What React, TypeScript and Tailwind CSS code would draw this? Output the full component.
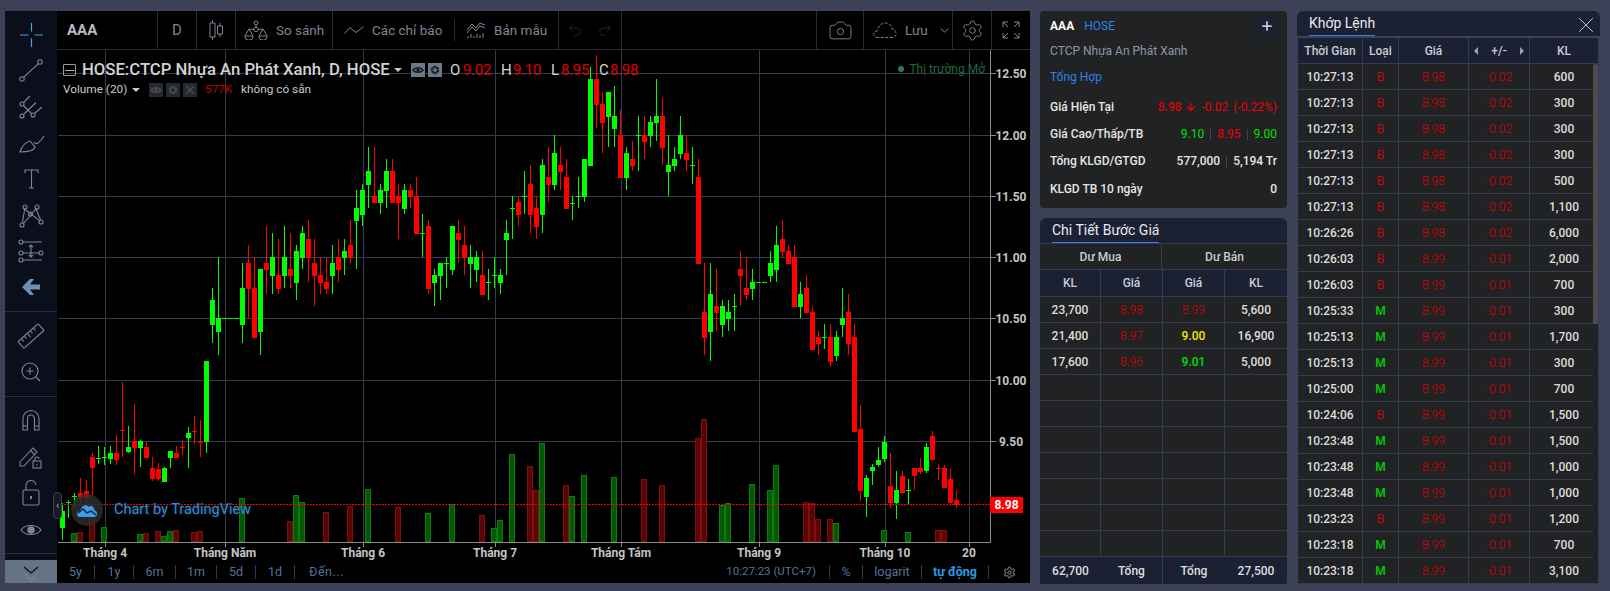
import { ArrowDown, Camera, Plus, Redo2, Settings, Undo2, X } from 'lucide-react'
import type { ReactNode } from 'react'

// [green, wickTop, bodyTop, bodyBottom, wickBottom], one per day, 6px apart from x=62
const candles: [number, number, number, number, number][] = [
  [1,503,511,528,540],[1,500,502,502,518],[1,493,496,496,507],[0,478,493,498,503],[0,480,491,498,503],
  [0,453,457,468,497],[1,446,458,458,464],[1,447,457,457,465],[1,446,453,459,464],[0,435,453,460,465],
  [0,382,430,431,457],[1,426,447,452,453],[0,404,441,448,474],[1,440,441,448,467],[0,442,447,458,459],
  [0,457,468,479,481],[0,463,469,479,481],[1,467,468,482,482],[1,451,451,458,468],[0,446,453,458,458],
  [0,440,447,447,455],[1,427,433,438,468],[0,416,431,431,444],[0,420,442,442,457],[1,361,361,442,453],
  [1,288,300,325,343],[1,257,318,332,355],[1,318,318,318,318],[1,318,318,318,318],[1,318,318,318,318],
  [1,263,288,325,343],[0,245,263,289,318],[0,257,288,338,338],[1,269,269,332,355],[0,226,263,270,294],
  [1,233,257,276,294],[0,239,275,289,294],[1,226,257,276,288],[0,233,269,276,288],[1,245,251,283,300],
  [1,226,233,258,269],[0,220,239,258,282],[0,239,263,276,306],[0,257,275,283,294],[0,257,282,289,294],
  [1,245,263,276,294],[0,239,257,270,282],[1,239,251,258,275],[0,220,245,258,263],[1,190,208,221,269],
  [1,184,190,215,226],[1,147,171,185,208],[0,147,196,203,203],[1,184,190,203,214],[1,159,171,191,208],
  [0,159,171,203,203],[0,184,196,203,239],[1,184,190,209,214],[0,184,190,197,208],[0,177,196,234,234],
  [1,214,233,233,257],[0,220,226,289,294],[1,269,275,283,306],[1,263,263,276,300],[1,257,263,263,288],
  [1,226,226,270,275],[0,220,233,240,263],[0,226,245,258,275],[1,245,257,264,288],[1,251,257,270,282],
  [0,251,275,295,295],[1,269,282,282,300],[1,257,275,275,288],[1,269,275,283,294],[1,220,233,240,275],
  [1,196,208,208,239],[0,196,202,215,226],[1,171,196,196,214],[0,165,184,215,233],[0,196,208,227,239],
  [1,159,165,215,233],[0,147,177,185,202],[1,135,153,185,190],[0,147,165,172,190],[0,159,177,209,209],
  [1,196,203,203,220],[1,177,196,196,208],[1,159,159,197,202],[1,67,79,166,166],[0,55,79,105,128],
  [0,92,104,123,153],[1,92,92,117,147],[1,86,116,129,147],[0,110,135,178,178],[1,147,153,178,190],
  [0,141,159,166,171],[1,116,135,135,171],[0,116,135,142,159],[1,116,122,136,147],[1,79,116,123,141],
  [0,98,116,148,165],[1,135,165,172,196],[1,147,159,166,171],[1,116,135,154,159],[0,135,153,160,171],
  [1,147,165,165,184],[0,159,177,264,264],[0,263,312,338,355],[1,263,294,332,361],[0,269,306,313,331],
  [1,300,306,325,337],[1,300,312,319,331],[1,294,306,306,331],[0,251,269,276,306],[0,257,288,295,300],
  [1,269,282,289,300],[1,282,282,282,282],[1,282,282,282,282],[1,251,263,276,282],[1,226,245,270,282],
  [0,220,239,252,257],[0,245,251,264,264],[0,245,257,307,307],[1,282,294,307,318],[0,275,288,313,313],
  [0,306,312,350,350],[0,331,337,344,355],[1,324,337,337,349],[0,324,337,362,367],[1,331,337,356,361],
  [1,288,318,325,337],[0,294,312,344,355],[0,324,337,432,432],[0,405,429,491,501],[1,475,478,497,517],
  [1,464,467,471,485],[1,447,460,465,467],[1,436,442,459,462],[0,453,486,503,508],[1,471,490,503,519],
  [0,471,476,493,493],[1,479,490,490,505],[0,468,468,476,490],[0,458,468,472,474],[1,443,447,471,473],
  [0,431,436,460,460],[0,464,468,468,480],[0,465,468,488,488],[0,469,479,503,503],[0,490,500,505,508],
]

// [candle index, green, top y]
const volumes: [number, number, number][] = [
  [2,1,533],[3,0,532],[5,0,513],[7,1,527],[13,1,534],[14,0,533],[16,0,531],[17,1,536],[18,1,531],[19,0,530],
  [22,0,532],[23,0,531],[30,1,498],[38,0,521],[39,1,495],[40,1,502],[44,0,512],[48,0,506],[51,1,489],[56,0,507],
  [61,1,513],[65,1,504],[70,0,515],[72,1,528],[73,1,520],[75,1,454],[78,0,466],[79,0,490],[80,1,443],[84,0,485],
  [85,1,496],[87,1,475],[92,1,477],[97,0,479],[100,0,485],[106,0,438],[107,0,419],[110,1,505],[111,1,503],
  [115,1,484],[118,1,490],[119,1,465],[124,0,502],[125,0,503],[126,0,519],[128,0,519],[129,1,523],[137,1,530],
  [141,1,532],[146,0,530],[147,0,530],
]

const priceLines = [
  { y: 73, label: '12.50' }, { y: 135, label: '12.00' }, { y: 196, label: '11.50' }, { y: 257, label: '11.00' },
  { y: 318, label: '10.50' }, { y: 380, label: '10.00' }, { y: 441, label: '9.50' },
]
const timeLines = [
  { x: 105, label: 'Tháng 4' }, { x: 225, label: 'Tháng Năm' }, { x: 363, label: 'Tháng 6' }, { x: 495, label: 'Tháng 7' },
  { x: 621, label: 'Tháng Tám' }, { x: 759, label: 'Tháng 9' }, { x: 885, label: 'Tháng 10' }, { x: 969, label: '20' },
]

const trades: [string, string, string, string, string][] = [
  ['10:27:13','B','8.98','-0.02','600'],['10:27:13','B','8.98','-0.02','300'],['10:27:13','B','8.98','-0.02','300'],
  ['10:27:13','B','8.98','-0.02','300'],['10:27:13','B','8.98','-0.02','500'],['10:27:13','B','8.98','-0.02','1,100'],
  ['10:26:26','B','8.98','-0.02','6,000'],['10:26:03','B','8.99','-0.01','2,000'],['10:26:03','B','8.99','-0.01','700'],
  ['10:25:33','M','8.99','-0.01','300'],['10:25:13','M','8.99','-0.01','1,700'],['10:25:13','M','8.99','-0.01','300'],
  ['10:25:00','M','8.99','-0.01','700'],['10:24:06','B','8.99','-0.01','1,500'],['10:23:48','M','8.99','-0.01','1,500'],
  ['10:23:48','M','8.99','-0.01','1,000'],['10:23:48','M','8.99','-0.01','1,000'],['10:23:23','B','8.99','-0.01','1,200'],
  ['10:23:18','M','8.99','-0.01','700'],['10:23:18','M','8.99','-0.01','3,100'],
]

const book = [
  { buy: '23,700', bid: '8.98', ask: '8.99', askColor: 'text-[#d90000]', sell: '5,600' },
  { buy: '21,400', bid: '8.97', ask: '9.00', askColor: 'text-[#f5e400]', sell: '16,900' },
  { buy: '17,600', bid: '8.96', ask: '9.01', askColor: 'text-[#00e000]', sell: '5,000' },
]

function Tool({ children, className = 'h-[36px]' }: { children: ReactNode; className?: string }) {
  return (
    <div className={`flex items-center justify-center ${className}`}>
      <svg width="30" height="30" viewBox="0 0 30 30" fill="none" stroke="#7b8696" strokeWidth="1.1">
        {children}
      </svg>
    </div>
  )
}

function LeftToolbar() {
  return (
    <div className="relative flex w-[52px] shrink-0 flex-col bg-[#0b0f1b] pt-[6px]">
      <Tool>
        <path d="M4 15H12.5M18.5 15H27M15.5 3V11.5M15.5 18.5V27" stroke="#4aa6dc" strokeWidth="1.2" />
      </Tool>
      <Tool>
        <circle cx="6" cy="23" r="2.2" /><circle cx="24" cy="6" r="2.2" /><path d="M7.6 21.4 22.4 7.6" />
      </Tool>
      <Tool>
        <circle cx="6" cy="12" r="2" /><circle cx="6" cy="24" r="2" /><circle cx="17" cy="23" r="2" />
        <path d="M7.5 10.5 14 4M7.5 22.5 20 10.5M18.5 21.5 26 15M7.5 13.5 15.5 21.5" />
      </Tool>
      <Tool>
        <path d="M4 24C6 18 10 14 14 13L19 19C18 23 12 24 4 24Z" /><path d="M18 14C20 18 24 14 28 8" />
      </Tool>
      <Tool>
        <path d="M9 9V6H22V9M15.5 6V24M13 24H18" />
      </Tool>
      <Tool>
        <circle cx="9" cy="7" r="2" /><circle cx="21" cy="7" r="2" /><circle cx="6" cy="25" r="2" />
        <circle cx="25" cy="22" r="2" /><circle cx="14.5" cy="14" r="2" />
        <path d="M6.4 23 8.7 9 23.5 20.6M7.5 23.5 20 8.8 24.6 20" />
      </Tool>
      <Tool>
        <circle cx="5" cy="6" r="2" /><circle cx="5" cy="17" r="2" /><circle cx="5" cy="24" r="2" /><circle cx="25" cy="17" r="2" />
        <path d="M7 6H26M7 17H23M7 24H26M15 9V21M13 11 15 9 17 11M13 19 15 21 17 19" />
      </Tool>
      <Tool>
        <path d="M6 15 14 7H18L14 12.5H24V17.5H14L18 23H14Z" fill="#6c8fb5" stroke="none" />
      </Tool>
      <div className="mt-[6px] border-b border-[#2b303d]" />
      <Tool className="mt-[6px] h-[36px]">
        <g transform="rotate(-42 15 15)">
          <rect x="1.5" y="10.5" width="27" height="9" rx="1" />
          <path d="M6 10.5V14M10 10.5V14M14 10.5V15.5M18 10.5V14M22 10.5V14" />
        </g>
      </Tool>
      <Tool>
        <circle cx="14" cy="14" r="8" /><path d="M10.5 14H17.5M14 10.5V17.5M20 20 24 24" />
      </Tool>
      <div className="mt-[6px] border-b border-[#2b303d]" />
      <Tool className="mt-[5px] h-[36px]">
        <path d="M7 25V13.5A8 8 0 0 1 23 13.5V25H18.5V13.5A3.5 3.5 0 0 0 11.5 13.5V25ZM7 21H11.5M18.5 21H23" />
      </Tool>
      <Tool>
        <path d="M4 21 17 7 21 11 8 25 4 25ZM14.5 9.5 18.5 13.5" />
        <rect x="17" y="20" width="8" height="7" /><path d="M19 20V18A2 2 0 0 1 23 18" /><path d="M21 23V24.5" />
      </Tool>
      <Tool className="h-[38px]">
        <rect x="7" y="12" width="16" height="15" rx="1.5" /><path d="M10 12V8A5 5 0 0 1 20 7" />
        <path d="M15 18V21" strokeWidth="2" />
      </Tool>
      <Tool>
        <path d="M5 15C9 9 21 9 25 15C21 21 9 21 5 15Z" /><circle cx="15" cy="15" r="3.2" fill="#7b8696" />
      </Tool>
      <div className="mt-[5px] border-b border-[#2b303d]" />
      <div className="absolute bottom-0 left-0 flex h-[23px] w-full justify-center bg-[#667382]">
        <svg width="20" height="23" viewBox="0 0 20 23" fill="none">
          <path d="M3 13 10 19 17 13M4 17 10 22 16 17" stroke="#7d8998" />
          <path d="M3 7 10 13 17 7" stroke="#0b0f1b" strokeWidth="1.3" />
        </svg>
      </div>
    </div>
  )
}

function Seg({ className, children }: { className: string; children?: ReactNode }) {
  return <div className={`flex h-full shrink-0 items-center border-r border-[#272b3a] ${className}`}>{children}</div>
}

function TopBar() {
  return (
    <div className="flex h-[39px] shrink-0 items-center border-b border-[#272b3a] text-[13.5px] text-[#7a8597]">
      <Seg className="w-[101px] pl-[10px] text-[15px] font-bold text-[#b8bcc4]">AAA</Seg>
      <Seg className="w-[39px] justify-center text-[15px]">D</Seg>
      <Seg className="w-[39px] justify-center">
        <svg width="16" height="22" viewBox="0 0 16 22" fill="none" stroke="#7a8597">
          <path d="M4.5 1V4M4.5 18V21M4.5 4H2V18H7V4ZM12 4V7M12 15V18M9.5 7H14.5V15H9.5Z" />
        </svg>
      </Seg>
      <Seg className="w-[97px] gap-[8px] pl-[8px]">
        <svg width="24" height="20" viewBox="0 0 24 20" fill="none" stroke="#7a8597">
          <circle cx="12" cy="3" r="2" /><circle cx="12" cy="9.5" r="2.2" /><path d="M12 5V7.3M1 16 5 9 10 9.5M14 9.5 19 9 23 16M5 9 9 16M19 9 15 16" />
          <path d="M1 16H9V17A3 2.4 0 0 1 1 17ZM15 16H23V17A3 2.4 0 0 1 15 17Z" />
        </svg>
        <span>So sánh</span>
      </Seg>
      <div className="flex h-full w-[121px] shrink-0 items-center gap-[8px] pl-[11px]">
        <svg width="20" height="10" viewBox="0 0 20 10" fill="none" stroke="#7a8597">
          <path d="M0.5 8.5 6 2.5 12 7.5 19.5 1.5" />
        </svg>
        <span>Các chỉ báo</span>
      </div>
      <div className="h-[22px] w-px shrink-0 bg-[#272b3a]" />
      <Seg className="w-[104px] gap-[8px] pl-[11px]">
        <svg width="20" height="18" viewBox="0 0 20 18" fill="none" stroke="#7a8597">
          <path d="M1 9 6 3 10 7 14 2 19 4M1 12 6 6 10 10 14 5 19 7" />
          <path d="M2 17V15M5 17V13M8 17V15M11 17V13M14 17V14M17 17V12" />
        </svg>
        <span>Bản mẫu</span>
      </Seg>
      <Seg className="w-[63px] justify-center gap-[14px]">
        <Undo2 size={16} strokeWidth={1} className="text-[#33373f]" />
        <Redo2 size={16} strokeWidth={1} className="text-[#33373f]" />
      </Seg>
      <Seg className="w-[195px]" />
      <Seg className="w-[47px] justify-center">
        <Camera size={25} strokeWidth={0.9} className="text-[#7a8597]" />
      </Seg>
      <Seg className="w-[89px] pl-[8px]">
        <svg width="26" height="18" viewBox="0 0 26 18" fill="none" stroke="#7a8597" strokeDasharray="3 1.5">
          <path d="M6 16.5C1 16.5 0 11 5 10C6 4 12 0 17 3C19 4 20 6 20 8C25 9 26 16 20 16.5Z" />
        </svg>
        <span className="ml-[7px]">Lưu</span>
        <svg className="ml-[12px]" width="9" height="5" viewBox="0 0 9 5" fill="none" stroke="#7a8597">
          <path d="M0.5 0.5 4.5 4 8.5 0.5" />
        </svg>
      </Seg>
      <Seg className="w-[39px] justify-center">
        <Settings size={23} strokeWidth={1} className="text-[#7a8597]" />
      </Seg>
      <div className="flex flex-1 justify-center">
        <svg width="18" height="18" viewBox="0 0 18 18" fill="none" stroke="#7a8597">
          <path d="M1 6V1H6M1 1 6 6M12 1H17V6M17 1 12 6M1 12V17H6M1 17 6 12M12 17H17V12M17 17 12 12" />
        </svg>
      </div>
    </div>
  )
}

function PriceChart() {
  return (
    <svg className="absolute inset-0" width="973" height="510" viewBox="57 50 973 510" shapeRendering="crispEdges">
      {priceLines.map((p) => (
        <g key={p.y}>
          <rect x="58" y={p.y} width="932" height="1" fill="#363a4d" />
          <rect x="991" y={p.y} width="5" height="1" fill="#8a8a8a" />
        </g>
      ))}
      {timeLines.map((t) => (
        <g key={t.x}>
          <rect x={t.x} y="50" width="1" height="492" fill="#363a4d" />
          <rect x={t.x} y="543" width="1" height="4" fill="#8a8a8a" />
        </g>
      ))}
      {volumes.map(([i, green, top]) => (
        <rect
          key={i}
          x={59.5 + 6 * i}
          y={top + 0.5}
          width="5"
          height={541 - top}
          fill={green ? '#045a04' : '#5c0404'}
          stroke={green ? '#0a7c0a' : '#7e1010'}
        />
      ))}
      {candles.map(([green, wt, bt, bb, wb], i) => {
        const color = green ? '#00ff00' : '#ff0000'
        return (
          <g key={i} fill={color}>
            <rect x={62 + 6 * i} y={wt} width="1" height={Math.max(wb - wt, 1)} />
            <rect x={60 + 6 * i} y={bt} width="5" height={Math.max(bb - bt, 1)} />
          </g>
        )
      })}
      <rect x="990" y="50" width="1" height="493" fill="#8a8a8a" />
      <rect x="58" y="542" width="933" height="1" fill="#8a8a8a" />
      <path d="M58 504.5H990" stroke="#ff0000" strokeDasharray="2 1" />
      <g shapeRendering="auto" fontFamily="Roboto, sans-serif" fontWeight="700" fontSize="12" fill="#c4c4c4" textAnchor="middle">
        {priceLines.map((p) => (
          <text key={p.y} x="1011" y={p.y + 5}>{p.label}</text>
        ))}
        {timeLines.map((t) => (
          <text key={t.x} x={t.x} y="557">{t.label}</text>
        ))}
      </g>
    </svg>
  )
}

function MiniBtn({ dim = false, children }: { dim?: boolean; children: ReactNode }) {
  return (
    <span className={`flex h-[14px] w-[14px] items-center justify-center ${dim ? 'bg-[#25282d]' : 'bg-[#6a7887]'}`}>
      <svg width="12" height="12" viewBox="0 0 12 12" fill="none" stroke={dim ? '#4a4d52' : '#16181d'} strokeWidth="1.5">
        {children}
      </svg>
    </span>
  )
}

const eyeGlyph = (
  <>
    <path d="M1 6C3 3 9 3 11 6C9 9 3 9 1 6Z" /><circle cx="6" cy="6" r="1" />
  </>
)
const gearGlyph = <circle cx="6" cy="6" r="3" strokeWidth="2.4" strokeDasharray="2.4 0.6" />

function Ohlc({ letter, value, className, letterWidth }: { letter: string; value: string; className: string; letterWidth: string }) {
  return (
    <span className={`flex text-[15px] font-normal tracking-[-0.3px] ${className}`}>
      <span className={letterWidth}>{letter}</span>
      <span className="text-[#e00000]">{value}</span>
    </span>
  )
}

function Legend() {
  return (
    <>
      <div className="absolute left-[6px] top-[11px] flex h-[18px] items-center text-[16.7px] font-medium leading-none text-[#d2d2d2]">
        <span className="flex h-[12px] w-[13px] items-center justify-center rounded-[1px] border border-[#9a9a9a]">
          <span className="h-px w-[9px] bg-[#b5b5b5]" />
        </span>
        <span className="ml-[6px] w-[308px] whitespace-nowrap">HOSE:CTCP Nhựa An Phát Xanh, D, HOSE</span>
        <span className="ml-[4px] h-0 w-0 border-x-[4px] border-t-[4px] border-x-transparent border-t-[#c8c8c8]" />
        <span className="ml-[9px] flex gap-[3px]">
          <MiniBtn>{eyeGlyph}</MiniBtn>
          <MiniBtn>{gearGlyph}</MiniBtn>
        </span>
        <Ohlc letter="O" value="9.02" className="ml-[8px] w-[51px]" letterWidth="w-[13px]" />
        <Ohlc letter="H" value="9.10" className="w-[50px]" letterWidth="w-[12px]" />
        <Ohlc letter="L" value="8.95" className="w-[48px]" letterWidth="w-[10px]" />
        <Ohlc letter="C" value="8.98" className="w-[40px]" letterWidth="w-[11px]" />
      </div>
      <div className="absolute left-[6px] top-[32px] flex h-[16px] items-center text-[11.8px] leading-none text-[#c8c8c8]">
        <span className="w-[65px] whitespace-nowrap">Volume (20)</span>
        <span className="ml-[4px] h-0 w-0 border-x-[4px] border-t-[4px] border-x-transparent border-t-[#c8c8c8]" />
        <span className="ml-[9px] flex gap-[3px]">
          <MiniBtn dim>{eyeGlyph}</MiniBtn>
          <MiniBtn dim>{gearGlyph}</MiniBtn>
          <MiniBtn dim><path d="M2 2 10 10M10 2 2 10" /></MiniBtn>
        </span>
        <span className="ml-[8px] w-[26px] text-[#c00000]">577K</span>
        <span className="ml-[10px]">không có sẵn</span>
      </div>
      <div className="absolute right-[45px] top-[13px] flex items-center gap-[5px] text-[12px] leading-none text-[#1f6b3d]">
        <span className="h-[6px] w-[6px] rounded-full bg-[#2a7d4b]" />
        <span>Thị trường Mở</span>
      </div>
      <div className="absolute left-[14px] top-[444px] flex items-center">
        <span className="flex h-[32px] w-[32px] items-center justify-center rounded-full bg-[#2e2e2e]/80">
          <svg width="22" height="15" viewBox="0 0 22 15">
            <path d="M4 14C0 14 0 8 4 8C5 3 10 0 13 4C14 1 19 4 18 7C22 8 22 14 18 14Z" fill="#3a9fe8" />
            <path d="M2 10 7 6 11 10 15 8 20 12" fill="none" stroke="#16202c" strokeWidth="1.4" />
          </svg>
        </span>
        <span className="ml-[11px] text-[14.5px] text-[#358ace] [text-shadow:0_0_3px_#0f3a5c]">Chart by TradingView</span>
      </div>
      <div className="absolute left-[-4px] top-[442px] flex h-[27px] w-[9px] items-center justify-center rounded-[4px] border border-[#3a3f50] bg-[#161a26] text-[10px] leading-none text-[#a8acb5]">
        ‹
      </div>
      <div className="absolute left-[933px] top-[447px] flex h-[16px] w-[33px] items-center justify-center bg-[#ff0000] text-[12px] font-bold text-white">
        8.98
      </div>
    </>
  )
}

function RangeBtn({ className, children }: { className: string; children: ReactNode }) {
  return <div className={`flex h-[14px] items-center justify-center border-r border-[#34373f] ${className}`}>{children}</div>
}

function BottomBar() {
  return (
    <div className="flex h-[23px] shrink-0 items-center pt-[1px] text-[12.5px] text-[#527399]">
      <RangeBtn className="w-[38px]">5y</RangeBtn>
      <RangeBtn className="w-[39px]">1y</RangeBtn>
      <RangeBtn className="w-[42px]">6m</RangeBtn>
      <RangeBtn className="w-[41px]">1m</RangeBtn>
      <RangeBtn className="w-[39px]">5d</RangeBtn>
      <RangeBtn className="w-[39px]">1d</RangeBtn>
      <div className="ml-[14px] tracking-[0.5px]">Đến...</div>
      <div className="ml-auto pr-[13px] text-[11.5px]">10:27:23 (UTC+7)</div>
      <div className="h-[14px] w-px bg-[#34373f]" />
      <div className="flex h-[14px] w-[33px] items-center justify-center border-r border-[#34373f]">%</div>
      <div className="flex h-[14px] w-[59px] items-center justify-center border-r border-[#34373f]">logarit</div>
      <div className="flex h-[14px] w-[67px] items-center justify-center border-r border-[#34373f] font-bold text-[#2a9be0]">tự động</div>
      <div className="flex w-[41px] justify-center">
        <Settings size={13} strokeWidth={2.4} className="text-[#5f6a78]" />
      </div>
    </div>
  )
}

function InfoRow({ label, children }: { label: string; children: ReactNode }) {
  return (
    <div className="flex h-[27.4px] items-center justify-between px-[10px] text-[12px] font-medium text-[#e6e6e6]">
      <span>{label}</span>
      <span className="flex items-center">{children}</span>
    </div>
  )
}

const Bar = () => <span className="mx-[6px] h-[11px] w-px bg-[#44474d]" />

function InfoPanel() {
  return (
    <div className="h-[197px] rounded-[4px] bg-[#212224] pt-[4px]">
      <div className="flex h-[22px] items-center justify-between pl-[10px] pr-[10px] text-[12px]">
        <span>
          <span className="font-bold text-white">AAA</span>
          <span className="ml-[10px] text-[#2f80ed]">HOSE</span>
        </span>
        <span className="flex h-[19px] w-[20px] items-center justify-center rounded-[3px] bg-[#1b2133]">
          <Plus size={14} strokeWidth={3} className="text-[#c5cad6]" />
        </span>
      </div>
      <div className="flex h-[27px] items-center px-[10px] text-[12px] text-[#8f96a8]">CTCP Nhựa An Phát Xanh</div>
      <div className="flex h-[25px] items-center px-[10px] text-[12px] text-[#2f80ed]">Tổng Hợp</div>
      <div className="pt-[4px]">
        <InfoRow label="Giá Hiện Tại">
          <span className="flex items-center font-normal text-[#f00000]">
            8.98
            <ArrowDown size={12} strokeWidth={2.5} className="mx-[4px]" />
            -0.02
            <span className="ml-[5px]">(-0.22%)</span>
          </span>
        </InfoRow>
        <InfoRow label="Giá Cao/Thấp/TB">
          <span className="font-normal text-[#00e000]">9.10</span><Bar />
          <span className="font-normal text-[#f00000]">8.95</span><Bar />
          <span className="font-normal text-[#00e000]">9.00</span>
        </InfoRow>
        <InfoRow label="Tổng KLGD/GTGD">
          577,000<Bar />5,194 Tr
        </InfoRow>
        <InfoRow label="KLGD TB 10 ngày">0</InfoRow>
      </div>
    </div>
  )
}

function PanelHeader({ title, children }: { title: string; children?: ReactNode }) {
  return (
    <div className="relative flex h-[25px] shrink-0 rounded-t-[6px] bg-[#1b2133] pl-[12px]">
      <span className="h-[25px] border-b border-[#2f80ed] text-[14px] leading-[25px] text-[#e8eaee]">{title}</span>
      {children}
    </div>
  )
}

const cell = 'flex items-center justify-center border-r border-b border-[#363b52]'

function BookPanel() {
  return (
    <div className="flex flex-col">
      <PanelHeader title="Chi Tiết Bước Giá" />
      <div className="grid grid-cols-[122px_125px] border-t border-[#363b52] bg-[#212224] text-[12px] font-medium text-[#c9ccd2]">
        <div className={`${cell} h-[26px]`}>Dư Mua</div>
        <div className="flex h-[26px] items-center justify-center border-b border-[#363b52]">Dư Bán</div>
      </div>
      <div className="grid grid-cols-[61px_62px_62px_62px] bg-[#1b2133] text-[12px] font-medium text-[#c9ccd2]">
        <div className={`${cell} h-[27px]`}>KL</div>
        <div className={`${cell} h-[27px]`}>Giá</div>
        <div className={`${cell} h-[27px]`}>Giá</div>
        <div className={`${cell} h-[27px] border-r-0`}>KL</div>
      </div>
      <div className="grid grid-cols-[61px_62px_62px_62px] bg-[#212224] text-[12px] font-medium text-[#dedede]">
        {Array.from({ length: 10 }).map((_, i) => {
          const row = book[i]
          return (
            <div key={i} className="contents">
              <div className={`${cell} h-[26px]`}>{row?.buy}</div>
              <div className={`${cell} h-[26px] font-light text-[#d90000]`}>{row?.bid}</div>
              <div className={`${cell} h-[26px] ${row?.askColor ?? ''} ${i === 0 ? 'font-light' : ''}`}>{row?.ask}</div>
              <div className={`${cell} h-[26px] border-r-0`}>{row?.sell}</div>
            </div>
          )
        })}
      </div>
      <div className="grid h-[27px] grid-cols-[61px_62px_62px_62px] items-center rounded-b-[2px] bg-[#1b2133] text-center text-[12px] font-medium text-[#dedede]">
        <span>62,700</span>
        <span className="flex h-full items-center justify-center border-r border-[#363b52]">Tổng</span>
        <span>Tổng</span>
        <span>27,500</span>
      </div>
    </div>
  )
}

const tradeCols = 'grid grid-cols-[65px_36px_70px_61px_69px]'

function TradePanel() {
  return (
    <div className="flex w-[303px] shrink-0 flex-col">
      <PanelHeader title="Khớp Lệnh">
        <X size={26} strokeWidth={0.9} className="absolute right-[1px] top-[1px] text-[#c5cad6]" />
      </PanelHeader>
      <div className="relative mt-[2px] ml-px w-[301px]">
        <div className={`${tradeCols} bg-[#1b2133] text-[12px] font-medium text-[#c9ccd2]`}>
          <div className={`${cell} h-[26px]`}>Thời Gian</div>
          <div className={`${cell} h-[26px]`}>Loại</div>
          <div className={`${cell} h-[26px]`}>Giá</div>
          <div className="flex h-[26px] items-center justify-between border-r border-b border-[#363b52] px-[5px]">
            <span className="h-0 w-0 border-y-[4px] border-r-[4px] border-y-transparent border-r-[#9aa0ad]" />
            <span>+/-</span>
            <span className="h-0 w-0 border-y-[4px] border-l-[4px] border-y-transparent border-l-[#9aa0ad]" />
          </div>
          <div className={`${cell} h-[26px]`}>KL</div>
        </div>
        {trades.map(([time, side, price, change, volume], i) => (
          <div key={i} className={`${tradeCols} bg-[#212224] text-[12px]`}>
            <div className={`${cell} h-[26px] font-medium text-[#dedede]`}>{time}</div>
            <div className={`${cell} h-[26px] ${side === 'M' ? 'font-medium text-[#00d000]' : 'font-light text-[#f00000]'}`}>{side}</div>
            <div className={`${cell} h-[26px] font-light text-[#d90000]`}>{price}</div>
            <div className={`${cell} h-[26px] font-light text-[#d90000]`}>{change}</div>
            <div className={`${cell} h-[26px] font-medium text-[#dedede]`}>{volume}</div>
          </div>
        ))}
        <div className="absolute right-[1px] top-[26px] h-[519px] w-[5px] bg-[#212224]">
          <div className="h-[260px] rounded-t-[2px] bg-[#4b4b4b]" />
        </div>
      </div>
    </div>
  )
}

export default function App() {
  return (
    <div className="flex h-[591px] w-[1610px] items-start overflow-hidden bg-[#3c4158] pl-[5px] pt-[11px] font-[Roboto,sans-serif]">
      <div className="flex h-[572px] w-[1025px] shrink-0 bg-black">
        <LeftToolbar />
        <div className="flex min-w-0 flex-1 flex-col">
          <TopBar />
          <div className="relative h-[510px] shrink-0">
            <PriceChart />
            <Legend />
          </div>
          <BottomBar />
        </div>
      </div>
      <div className="ml-[10px] flex w-[247px] shrink-0 flex-col gap-[10px]">
        <InfoPanel />
        <BookPanel />
      </div>
      <div className="ml-[10px]">
        <TradePanel />
      </div>
    </div>
  )
}
